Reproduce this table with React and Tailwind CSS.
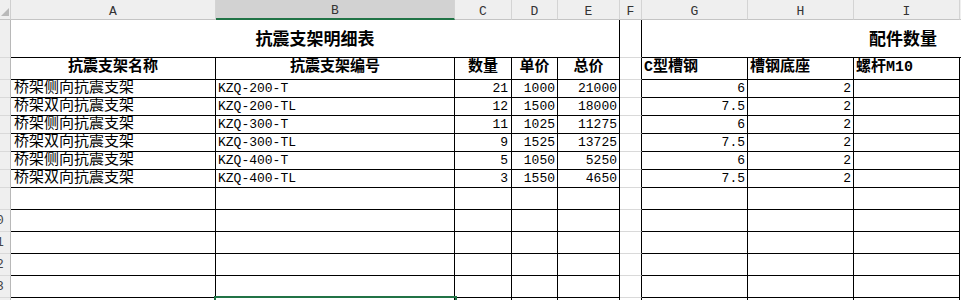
import clsx from "clsx";

const FONT = "font-['Liberation_Mono','Noto_Sans_CJK_SC','Noto_Sans_CJK_JP',monospace]";

const COLS = [
  { key: "A", w: "w-[205px]" },
  { key: "B", w: "w-[239px]" },
  { key: "C", w: "w-[57px]" },
  { key: "D", w: "w-[46px]" },
  { key: "E", w: "w-[62px]" },
  { key: "F", w: "w-[22px]" },
  { key: "G", w: "w-[106px]" },
  { key: "H", w: "w-[106px]" },
  { key: "I", w: "w-[106px]" },
];

const ROWS = [
  ["桥架侧向抗震支架", "KZQ-200-T", 21, 1000, 21000, 6, 2],
  ["桥架双向抗震支架", "KZQ-200-TL", 12, 1500, 18000, 7.5, 2],
  ["桥架侧向抗震支架", "KZQ-300-T", 11, 1025, 11275, 6, 2],
  ["桥架双向抗震支架", "KZQ-300-TL", 9, 1525, 13725, 7.5, 2],
  ["桥架侧向抗震支架", "KZQ-400-T", 5, 1050, 5250, 6, 2],
  ["桥架双向抗震支架", "KZQ-400-TL", 3, 1550, 4650, 7.5, 2],
];

const cell = "shrink-0 flex items-center overflow-hidden whitespace-nowrap border-r border-b border-black";
const gap = "w-[22px] shrink-0 border-r border-r-black border-b border-b-[#d9d9d9]";

function RowHead({ num }) {
  return (
    <div className="w-[11px] shrink-0 bg-[#efefef] border-r border-r-[#b8b8b8] border-b border-b-[#d9d9d9] flex items-center justify-end overflow-hidden">
      <span className="w-[28px] shrink-0 text-center text-[13px] text-[#444]">{num}</span>
    </div>
  );
}

function ColumnHeader() {
  return (
    <div className="flex h-[20px]">
      <div className="w-[11px] shrink-0 bg-[#efefef] border-r border-r-[#cfcfcf] border-b border-b-[#c4c4c4] flex items-end justify-end pb-[3px] pr-[1px]">
        <svg width="8" height="8" viewBox="0 0 8 8">
          <polygon points="8,0 8,8 0,8" fill="#b9b9b9" />
        </svg>
      </div>
      {COLS.map((c) => (
        <div
          key={c.key}
          className={clsx(
            "shrink-0 flex justify-center items-center pt-[4px] text-[13px] text-[#333] border-r border-r-[#d4d4d4]",
            c.w,
            c.key === "B"
              ? "bg-[#d2d2d2] border-b-2 border-b-[#217346]"
              : "bg-[#efefef] border-b border-b-[#c4c4c4]"
          )}
        >
          {c.key}
        </div>
      ))}
      <div className="flex-1 bg-[#efefef] border-b border-b-[#c4c4c4]" />
    </div>
  );
}

function EmptyRow({ num }) {
  return (
    <div className="flex h-[22px]">
      <RowHead num={num} />
      <div className={clsx(cell, "w-[205px]")} />
      <div className={clsx(cell, "w-[239px]")} />
      <div className={clsx(cell, "w-[57px]")} />
      <div className={clsx(cell, "w-[46px]")} />
      <div className={clsx(cell, "w-[62px]")} />
      <div className={gap} />
      <div className={clsx(cell, "w-[106px]")} />
      <div className={clsx(cell, "w-[106px]")} />
      <div className={clsx(cell, "w-[106px]")} />
      <div className="flex-1" />
    </div>
  );
}

export default function App() {
  return (
    <div className={clsx("relative w-[961px] h-[300px] overflow-hidden bg-white text-black antialiased", FONT)}>
      <ColumnHeader />

      {/* title row */}
      <div className="flex h-[38px] text-[17px] font-bold">
        <RowHead num={1} />
        <div className="w-[609px] shrink-0 border-r border-b border-black flex items-center justify-center pt-[5px]">
          抗震支架明细表
        </div>
        <div className={gap} />
        <div className="flex-1 border-b border-black flex items-center pl-[227px] pt-[5px] whitespace-nowrap">
          配件数量
        </div>
      </div>

      {/* header row */}
      <div className="flex h-[22px] text-[15px] font-bold">
        <RowHead num={2} />
        <div className={clsx(cell, "w-[205px] justify-center")}>抗震支架名称</div>
        <div className={clsx(cell, "w-[239px] justify-center")}>抗震支架编号</div>
        <div className={clsx(cell, "w-[57px] justify-center")}>数量</div>
        <div className={clsx(cell, "w-[46px] justify-center")}>单价</div>
        <div className={clsx(cell, "w-[62px] justify-center")}>总价</div>
        <div className={gap} />
        <div className={clsx(cell, "w-[106px] pl-[2px]")}>C型槽钢</div>
        <div className={clsx(cell, "w-[106px] pl-[2px]")}>槽钢底座</div>
        <div className={clsx(cell, "w-[106px] pl-[2px]")}>螺杆M10</div>
        <div className="flex-1" />
      </div>

      {/* data rows */}
      {ROWS.map((r, i) => (
        <div key={i} className="flex h-[18px] leading-[18px]">
          <RowHead num={i + 3} />
          <div className={clsx(cell, "w-[205px] pl-[3px] text-[15px] text-black")}>{r[0]}</div>
          <div className={clsx(cell, "w-[239px] pl-[2px] text-[13px]")}>{r[1]}</div>
          <div className={clsx(cell, "w-[57px] justify-end pr-[3px] text-[13px]")}>{r[2]}</div>
          <div className={clsx(cell, "w-[46px] justify-end pr-[2px] text-[13px]")}>{r[3]}</div>
          <div className={clsx(cell, "w-[62px] justify-end pr-[2px] text-[13px]")}>{r[4]}</div>
          <div className={gap} />
          <div className={clsx(cell, "w-[106px] justify-end pr-[2px] text-[13px]")}>{r[5]}</div>
          <div className={clsx(cell, "w-[106px] justify-end pr-[2px] text-[13px]")}>{r[6]}</div>
          <div className={clsx(cell, "w-[106px]")} />
          <div className="flex-1" />
        </div>
      ))}

      {[9, 10, 11, 12, 13, 14].map((n) => (
        <EmptyRow key={n} num={n} />
      ))}

      {/* selected cell B14 */}
      <div className="absolute left-[214px] top-[296px] w-[243px] h-[26px] border-2 border-[#217346]" />
    </div>
  );
}
